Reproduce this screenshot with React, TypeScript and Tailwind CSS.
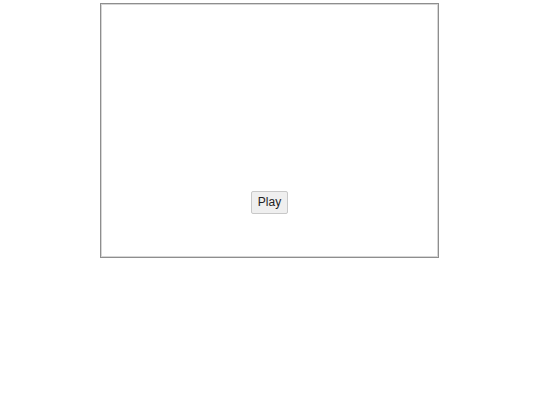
export default function App() {
  return (
    <div className="min-h-[405px] bg-white pt-[3px]">
      {/* player frame */}
      <div className="ml-[100px] flex h-[255px] w-[339px] flex-col items-center justify-end border border-[#8e8e8e] bg-white pb-[43px] shadow-[inset_0_0_0_1px_#d6d6d6]">
        <button className="rounded-[2px] border border-[#c8c8c8] bg-[#efefef] px-[6px] py-[3px] text-[12px] leading-[15px] text-[#222] font-['Liberation_Sans',Arial,sans-serif]">
          Play
        </button>
      </div>
    </div>
  );
}
